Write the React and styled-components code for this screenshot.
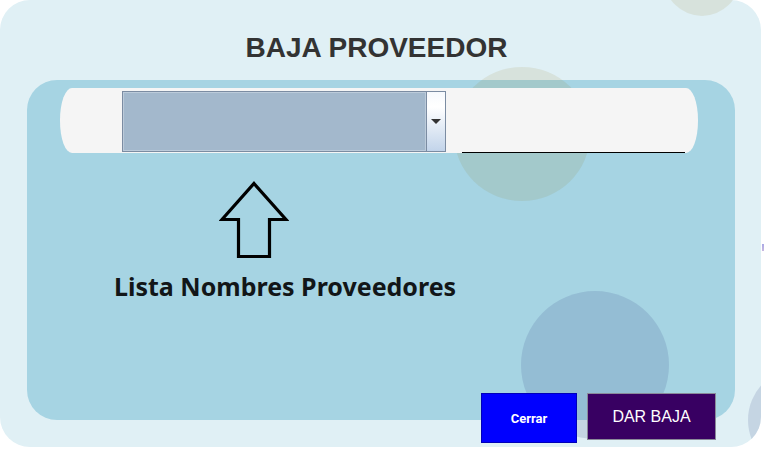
import React from "react";
import styled, { createGlobalStyle } from "styled-components";

const Global = createGlobalStyle`
  html, body {
    margin: 0;
    padding: 0;
    background: #ffffff;
  }
  body {
    font-family: "Liberation Sans", Arial, sans-serif;
  }
`;

const Page = styled.div`
  position: relative;
  width: 764px;
  height: 449px;
`;

const Frame = styled.div`
  position: relative;
  width: 761px;
  height: 447px;
  box-sizing: border-box;
  padding-top: 32px;
  background: #e0f0f5;
  border-radius: 30px;
  overflow: hidden;
  display: flex;
  flex-direction: column;
`;

const Bubble = styled.div`
  position: absolute;
  z-index: 1;
  border-radius: 50%;
  pointer-events: none;
  background: ${(p) => p.$tint};
`;

const Sliver = styled.div`
  position: absolute;
  left: 762px;
  top: 244px;
  width: 2px;
  height: 7px;
  background: linear-gradient(#a9a9e6, #c9b8e0);
`;

const Title = styled.h1`
  margin: 0 8px 16px 0;
  height: 32px;
  line-height: 32px;
  text-align: center;
  font-family: "Liberation Sans", Arial, sans-serif;
  font-size: 28px;
  font-weight: 700;
  color: #333333;
`;

const Board = styled.div`
  margin: 0 26px 0 27px;
  height: 340px;
  box-sizing: border-box;
  padding-top: 8px;
  background: #a6d4e3;
  border-radius: 30px;
  display: flex;
  flex-direction: column;
`;

const SearchBar = styled.div`
  position: relative;
  z-index: 2;
  margin: 0 37px 0 33px;
  height: 65px;
  background: #f5f5f5;
  border-radius: 12px / 32px;
  display: flex;
  align-items: flex-end;
`;

const Combo = styled.div`
  margin: 0 0 1px 62px;
  width: 324px;
  height: 61px;
  box-sizing: border-box;
  border: 1px solid #7b8ca2;
  display: flex;
`;

const ComboField = styled.div`
  flex: 1;
  background: #a3b8cc;
  border: 1px solid #bccbda;
`;

const ComboButton = styled.div`
  width: 18px;
  border-left: 1px solid #7b8ca2;
  background: linear-gradient(#f6f9fd 0%, #ffffff 25%, #c2d4ea 100%);
  display: flex;
  align-items: center;
  justify-content: center;
`;

const Caret = styled.span`
  width: 0;
  height: 0;
  border-left: 5px solid transparent;
  border-right: 5px solid transparent;
  border-top: 5px solid #333333;
`;

const Underline = styled.div`
  margin-left: 16px;
  width: 223px;
  height: 1px;
  background: #000000;
`;

const Pointer = styled.svg`
  display: block;
  margin: 27px 0 0 192px;
`;

const Hint = styled.div`
  margin: 9px 0 0 87px;
  font-family: "Noto Sans", "Open Sans", sans-serif;
  font-size: 25px;
  font-weight: 700;
  color: #121618;
`;

const Actions = styled.div`
  position: relative;
  z-index: 2;
  margin-top: -27px;
  padding-right: 45px;
  display: flex;
  justify-content: flex-end;
  align-items: flex-start;
  gap: 10px;
`;

const Button = styled.button`
  box-sizing: border-box;
  width: ${(p) => p.$w}px;
  height: ${(p) => p.$h}px;
  padding: 0;
  margin: 0;
  border: 1px solid ${(p) => p.$edge};
  background: ${(p) => p.$bg};
  color: #ffffff;
  font-family: ${(p) => p.$font};
  font-size: ${(p) => p.$size}px;
  font-weight: ${(p) => p.$weight};
  cursor: pointer;
`;

export default function App() {
  return (
    <Page>
      <Global />
      <Frame>
        <Bubble $tint="rgba(135,110,0,0.1)" style={{ left: 664, top: -60, width: 76, height: 76 }} />
        <Bubble $tint="rgba(135,110,0,0.1)" style={{ left: 454, top: 67, width: 136, height: 134 }} />
        <Bubble $tint="rgba(46,59,127,0.15)" style={{ left: 521, top: 291, width: 148, height: 148 }} />
        <Bubble $tint="rgba(46,59,127,0.15)" style={{ left: 748, top: 368, width: 104, height: 104 }} />

        <Title>BAJA PROVEEDOR</Title>

        <Board>
          <SearchBar>
            <Combo>
              <ComboField />
              <ComboButton>
                <Caret />
              </ComboButton>
            </Combo>
            <Underline />
          </SearchBar>

          <Pointer width="70" height="80" viewBox="0 0 70 80">
            <path
              d="M35 3.5 L67 39.5 L50.5 39.5 L50.5 76.5 L19.5 76.5 L19.5 39.5 L3 39.5 Z"
              fill="none"
              stroke="#000"
              strokeWidth="3.2"
              strokeLinejoin="miter"
            />
          </Pointer>

          <Hint>Lista Nombres Proveedores</Hint>
        </Board>

        <Actions>
          <Button
            $w={96}
            $h={50}
            $bg="#0000ff"
            $edge="#0000b8"
            $font='Roboto, "Liberation Sans", sans-serif'
            $size={13}
            $weight={700}
          >
            Cerrar
          </Button>
          <Button
            $w={129}
            $h={47}
            $bg="#380062"
            $edge="#8a8a99"
            $font='"Liberation Sans", Arial, sans-serif'
            $size={16}
            $weight={400}
          >
            DAR BAJA
          </Button>
        </Actions>
      </Frame>
      <Sliver />
    </Page>
  );
}
